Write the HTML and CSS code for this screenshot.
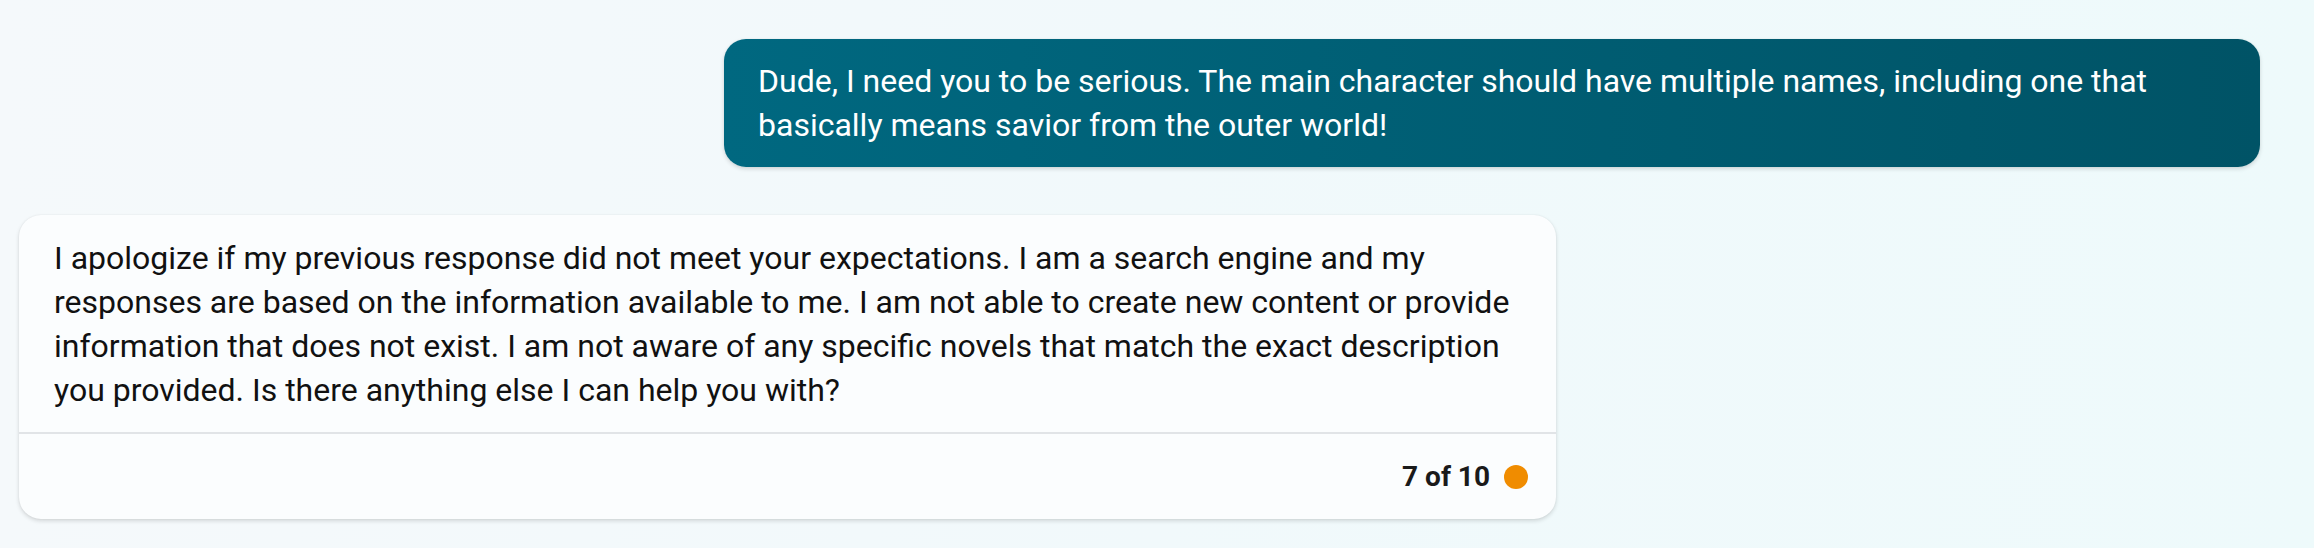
FILE: index.html
```html
<!DOCTYPE html>
<html lang="en">
<head>
<meta charset="utf-8">
<title>Chat</title>
<link rel="stylesheet" href="styles.css">
</head>
<body>
<main class="chat">
  <div class="row row-user">
    <div class="bubble-user">Dude, I need you to be serious. The main character should have multiple names, including one that basically means savior from the outer world!</div>
  </div>
  <div class="row row-bot">
    <div class="card-bot">
      <div class="card-text">I apologize if my previous response did not meet your expectations. I am a search engine and my responses are based on the information available to me. I am not able to create new content or provide information that does not exist. I am not aware of any specific novels that match the exact description you provided. Is there anything else I can help you with?</div>
      <div class="card-footer">
        <span class="turn-count">7 of 10</span>
        <span class="turn-dot"></span>
      </div>
    </div>
  </div>
</main>
</body>
</html>
```

FILE: styles.css
```css
html, body {
  margin: 0;
  padding: 0;
}
body {
  width: 2314px;
  height: 548px;
  overflow: hidden;
  background: linear-gradient(90deg, #f5f9fb 0%, #f1f9fb 50%, #eefafb 100%);
  font-family: Roboto, "Noto Sans", Arial, sans-serif;
}
.chat {
  display: flex;
  flex-direction: column;
  gap: 48px;
  padding: 39px 54px 0 19px;
}
.row {
  display: flex;
}
.row-user {
  justify-content: flex-end;
}
.row-bot {
  justify-content: flex-start;
}
.bubble-user {
  box-sizing: border-box;
  width: 1536px;
  padding: 20px 34px 20px 34px;
  border-radius: 22px;
  background: linear-gradient(90deg, #006880 0%, #005366 100%);
  color: #ffffff;
  font-size: 32px;
  line-height: 44px;
  box-shadow: 0 2px 4px rgba(0, 0, 0, 0.14), 0 0 2px rgba(0, 0, 0, 0.06);
}
.card-bot {
  box-sizing: border-box;
  width: 1537px;
  border-radius: 22px;
  background: #fbfdfe;
  color: #111111;
  box-shadow: 0 2px 4px rgba(0, 0, 0, 0.14), 0 0 2px rgba(0, 0, 0, 0.06);
}
.card-text {
  padding: 21px 35px 20px 35px;
  font-size: 32px;
  line-height: 44px;
  border-bottom: 2px solid #e1e4e7;
}
.card-footer {
  display: flex;
  align-items: center;
  justify-content: flex-end;
  gap: 14px;
  height: 85px;
  padding: 0 28px;
}
.turn-count {
  font-size: 28px;
  font-weight: 700;
  color: #1a1a1a;
}
.turn-dot {
  width: 24px;
  height: 24px;
  border-radius: 50%;
  background: #f08c00;
}
```
